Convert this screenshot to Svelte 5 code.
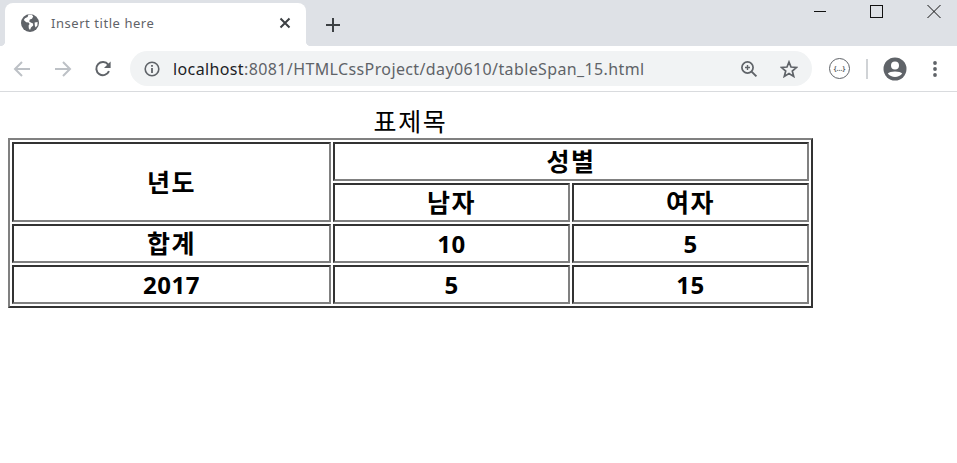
<script lang="ts">
  const rows = [
    { cells: ['합계', '10', '5'], hangulFirst: true },
    { cells: ['2017', '5', '15'], hangulFirst: false }
  ];
</script>

<div class="browser">
  <div class="tabstrip">
    <div class="tab">
      <svg class="globe" width="18" height="18" viewBox="0 0 18 18">
        <circle cx="9" cy="9" r="9" fill="#5f6368" />
        <path d="M7.5 0.6 L6.6 3 L4 4.2 L2.8 6 L5.2 8.2 L7.6 8.4 L8.6 10 L7.6 11.6 L7.8 14.2 L9 16 L10 13.6 L12.2 11.4 L12 9.4 L9.8 8.6 L8.2 7.4 L8.8 5.4 L11 4.8 L12.2 2.4 L10.6 0.6 Z M13.6 8.4 L16.6 8 L16.4 11.4 L14.6 13.6 L13.8 11.4 Z" fill="#fff" />
      </svg>
      <span class="title">Insert title here</span>
      <svg class="close" width="12" height="12" viewBox="0 0 12 12">
        <path d="M1.5 1.5 L10.5 10.5 M10.5 1.5 L1.5 10.5" stroke="#3c4043" stroke-width="2" fill="none" />
      </svg>
    </div>
    <svg class="plus" width="16" height="16" viewBox="0 0 16 16">
      <path d="M8 1 V15 M1 8 H15" stroke="#3c4043" stroke-width="2" fill="none" />
    </svg>
    <div class="winbtns">
      <svg width="14" height="14" viewBox="0 0 14 14"><path d="M1 6.5 H13" stroke="#111" fill="none" /></svg>
      <svg width="14" height="14" viewBox="0 0 14 14"><rect x="0.5" y="0.5" width="12" height="12" stroke="#111" fill="none" /></svg>
      <svg width="14" height="14" viewBox="0 0 14 14"><path d="M0.5 0 L13.5 13 M13.5 0 L0.5 13" stroke="#111" fill="none" /></svg>
    </div>
  </div>

  <div class="toolbar">
    <svg class="nav back" width="18" height="18" viewBox="0 0 18 18">
      <path d="M17 9 H2 M9 2 L2 9 L9 16" stroke="#bdc1c6" stroke-width="2" fill="none" />
    </svg>
    <svg class="nav fwd" width="18" height="18" viewBox="0 0 18 18">
      <path d="M1 9 H16 M9 2 L16 9 L9 16" stroke="#bdc1c6" stroke-width="2" fill="none" />
    </svg>
    <svg class="nav reload" width="18" height="18" viewBox="0 0 18 18">
      <path d="M15 11.2 A6.6 6.6 0 1 1 14.2 4.6" stroke="#5f6368" stroke-width="2" fill="none" />
      <path d="M16.6 1.4 V8 H10 Z" fill="#5f6368" />
    </svg>
    <div class="omnibox">
      <svg class="info" width="16" height="16" viewBox="0 0 16 16">
        <circle cx="8" cy="8" r="6.8" stroke="#5f6368" stroke-width="1.6" fill="none" />
        <path d="M8 7 V12 M8 4 V5.8" stroke="#5f6368" stroke-width="1.8" fill="none" />
      </svg>
      <span class="url"><span class="host">localhost</span>:8081/HTMLCssProject/day0610/tableSpan_15.html</span>
      <svg class="zoomicon" width="18" height="18" viewBox="0 0 18 18">
        <circle cx="7.5" cy="7.5" r="5.6" stroke="#5f6368" stroke-width="1.7" fill="none" />
        <path d="M11.6 11.6 L16.4 16.4" stroke="#5f6368" stroke-width="2" fill="none" />
        <path d="M7.5 5 V10 M5 7.5 H10" stroke="#5f6368" stroke-width="1.4" fill="none" />
      </svg>
      <svg class="star" width="18" height="18" viewBox="0 0 18 18">
        <path d="M9 2 L11 7 L16.6 7.4 L12.3 11 L13.7 16.4 L9 13.5 L4.3 16.4 L5.7 11 L1.4 7.4 L7 7 Z" stroke="#5f6368" stroke-width="1.7" fill="none" />
      </svg>
    </div>
    <div class="ext">
      <span>{'{...}'}</span>
    </div>
    <div class="sep"></div>
    <svg class="avatar" width="24" height="24" viewBox="0 0 24 24">
      <circle cx="12" cy="12" r="11.5" fill="#5f6368" />
      <circle cx="12" cy="8.6" r="4" fill="#fff" />
      <path d="M4.8 16.6 C6.5 13.8 17.5 13.8 19.2 16.6 C17.6 19 14.8 20 12 20 C9.2 20 6.4 19 4.8 16.6 Z" fill="#fff" />
    </svg>
    <svg class="dots" width="6" height="18" viewBox="0 0 6 18">
      <circle cx="3" cy="3" r="1.9" fill="#5f6368" />
      <circle cx="3" cy="9" r="1.9" fill="#5f6368" />
      <circle cx="3" cy="15" r="1.9" fill="#5f6368" />
    </svg>
  </div>
</div>

<main>
  <table>
    <caption>표제목</caption>
    <tbody>
      <tr>
        <th rowspan="2" class="c1 ko">년도</th>
        <th colspan="2" class="ko">성별</th>
      </tr>
      <tr>
        <th class="c2 ko">남자</th>
        <th class="ko">여자</th>
      </tr>
      {#each rows as row}
        <tr>
          {#each row.cells as cell, i}
            <th class:ko={row.hangulFirst && i === 0}>{cell}</th>
          {/each}
        </tr>
      {/each}
    </tbody>
  </table>
</main>

<style>
  :global(body) {
    background: #fff;
    font-family: "Noto Sans", "Noto Sans CJK KR", sans-serif;
  }

  .browser {
    height: 92px;
    overflow: hidden;
    border-bottom: 1px solid #d9dbde;
    box-sizing: border-box;
  }

  .tabstrip {
    height: 46px;
    background: #dee1e6;
    display: flex;
    align-items: flex-end;
  }

  .tab {
    width: 301px;
    height: 43px;
    margin-left: 5px;
    background: #fff;
    border-radius: 8px 8px 0 0;
    display: flex;
    align-items: center;
    box-sizing: border-box;
    padding: 0 15px 3px 16px;
    position: relative;
  }

  .tab::before,
  .tab::after {
    content: "";
    position: absolute;
    bottom: 0;
    width: 5px;
    height: 5px;
  }

  .tab::before {
    left: -5px;
    background: radial-gradient(circle at 0 0, #dee1e6 5px, #fff 5.5px);
  }

  .tab::after {
    right: -5px;
    background: radial-gradient(circle at 100% 0, #dee1e6 5px, #fff 5.5px);
  }

  .title {
    margin-left: 12px;
    font-size: 13px;
    color: #5f6368;
    letter-spacing: 0.55px;
    white-space: nowrap;
    flex: 1;
  }

  .plus {
    margin: 0 0 13px 19px;
  }

  .winbtns {
    margin-left: auto;
    align-self: flex-start;
    display: flex;
    gap: 43px;
    padding: 5px 16px 0 0;
  }

  .winbtns svg {
    display: block;
  }

  .toolbar {
    height: 45px;
    display: flex;
    align-items: center;
    background: #fff;
  }

  .nav {
    flex: none;
  }

  .back {
    margin-left: 13px;
  }

  .fwd {
    margin-left: 23px;
  }

  .reload {
    margin-left: 22px;
  }

  .omnibox {
    width: 682px;
    height: 35px;
    margin-left: 18px;
    background: #f1f3f4;
    border-radius: 18px;
    display: flex;
    align-items: center;
    box-sizing: border-box;
    padding: 0 14px;
  }

  .info {
    flex: none;
  }

  .url {
    margin-left: 13px;
    font-size: 16px;
    letter-spacing: 0.38px;
    color: #5f6368;
    white-space: nowrap;
    flex: 1;
  }

  .host {
    color: #202124;
  }

  .zoomicon {
    margin-right: 22px;
  }

  .ext {
    width: 21px;
    height: 21px;
    margin-left: 17px;
    border: 1.5px solid #5f6368;
    border-radius: 50%;
    box-sizing: border-box;
    display: flex;
    align-items: center;
    justify-content: center;
    font-size: 7px;
    font-weight: 700;
    color: #5f6368;
    flex: none;
  }

  .sep {
    width: 2px;
    height: 20px;
    margin-left: 16px;
    background: #d0d3d6;
    flex: none;
  }

  .avatar {
    margin-left: 15px;
    flex: none;
  }

  .dots {
    margin-left: 25px;
    flex: none;
  }

  main {
    padding: 0 8px;
  }

  table {
    width: 805px;
    border: 2px solid;
    border-color: #808080 #333 #333 #808080;
    border-spacing: 2px;
    box-sizing: border-box;
    table-layout: fixed;
  }

  caption {
    font-size: 25px;
    line-height: 33px;
    margin-top: 13px;
    letter-spacing: 1.6px;
    color: #000;
  }

  th {
    border: 2px solid;
    border-color: #333 #808080 #808080 #333;
    padding: 1px;
    font-size: 24px;
    line-height: 33px;
    font-weight: 700;
    letter-spacing: 0.5px;
    color: #000;
    text-align: center;
  }

  th.ko {
    font-size: 25px;
    letter-spacing: 1.4px;
  }

  .c1 {
    width: 313px;
  }

  .c2 {
    width: 231px;
  }
</style>
